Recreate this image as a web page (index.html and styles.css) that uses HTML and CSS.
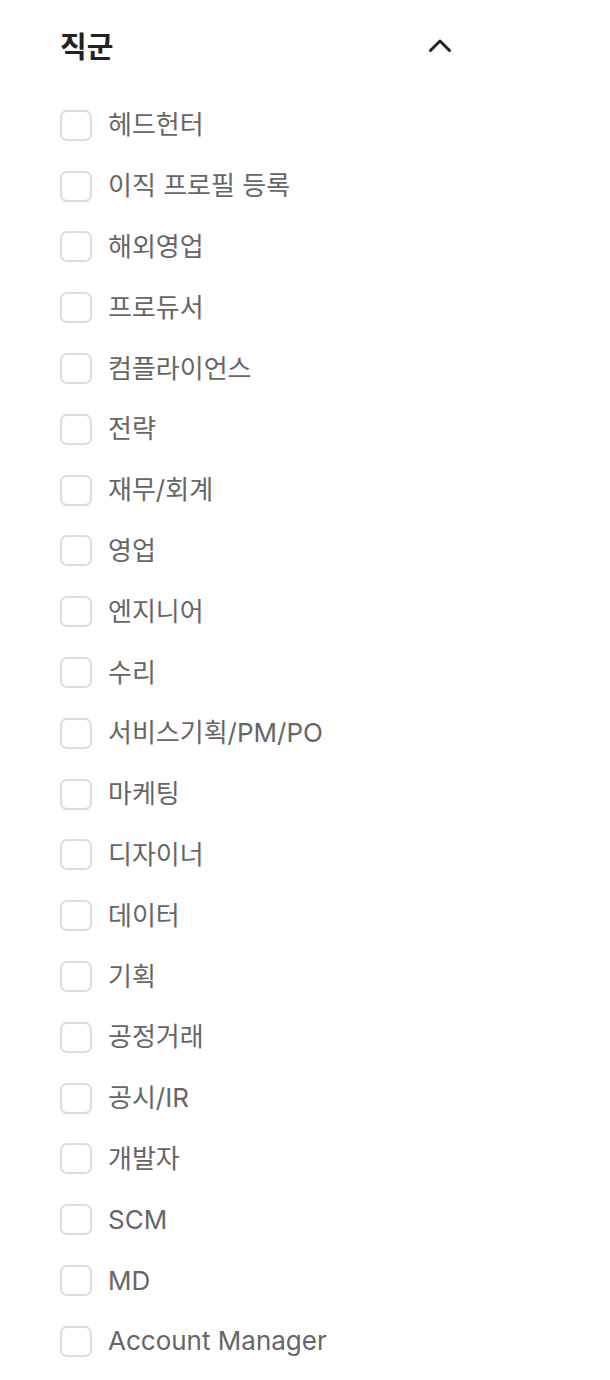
FILE: index.html
```html
<!DOCTYPE html>
<html lang="ko">
<head>
    <meta charset="UTF-8">
    <meta name="viewport" content="width=device-width, initial-scale=1.0">
    <title>직군</title>
    <link rel="stylesheet" href="styles.css">
</head>
<body>
    <div class="filter">
        <div class="filter-head">
            <h3 class="filter-title">직군</h3>
            <button class="toggle" type="button">
                <svg width="24" height="16" viewBox="0 0 24 16">
                    <path d="M2.5 13.5 L12 4 L21.5 13.5" fill="none" stroke="#222" stroke-width="3" stroke-linecap="round" stroke-linejoin="round"/>
                </svg>
            </button>
        </div>
        <ul class="options">
            <li><label><input type="checkbox"><span class="name">헤드헌터</span></label></li>
            <li><label><input type="checkbox"><span class="name">이직 프로필 등록</span></label></li>
            <li><label><input type="checkbox"><span class="name">해외영업</span></label></li>
            <li><label><input type="checkbox"><span class="name">프로듀서</span></label></li>
            <li><label><input type="checkbox"><span class="name">컴플라이언스</span></label></li>
            <li><label><input type="checkbox"><span class="name">전략</span></label></li>
            <li><label><input type="checkbox"><span class="name">재무/회계</span></label></li>
            <li><label><input type="checkbox"><span class="name">영업</span></label></li>
            <li><label><input type="checkbox"><span class="name">엔지니어</span></label></li>
            <li><label><input type="checkbox"><span class="name">수리</span></label></li>
            <li><label><input type="checkbox"><span class="name">서비스기획/PM/PO</span></label></li>
            <li><label><input type="checkbox"><span class="name">마케팅</span></label></li>
            <li><label><input type="checkbox"><span class="name">디자이너</span></label></li>
            <li><label><input type="checkbox"><span class="name">데이터</span></label></li>
            <li><label><input type="checkbox"><span class="name">기획</span></label></li>
            <li><label><input type="checkbox"><span class="name">공정거래</span></label></li>
            <li><label><input type="checkbox"><span class="name">공시/IR</span></label></li>
            <li><label><input type="checkbox"><span class="name">개발자</span></label></li>
            <li><label><input type="checkbox"><span class="name">SCM</span></label></li>
            <li><label><input type="checkbox"><span class="name">MD</span></label></li>
            <li><label><input type="checkbox"><span class="name">Account Manager</span></label></li>
        </ul>
    </div>
</body>
</html>
```

FILE: styles.css
```css
body{
    margin: 0;
    background: #fff;
    font-family: Inter, "Noto Sans CJK KR", sans-serif;
}
.filter{
    width: 392px;
    padding: 22px 0 0 60px;
}
.filter-head{
    display: flex;
    align-items: center;
    justify-content: space-between;
    height: 46px;
}
.filter-title{
    margin: 0;
    font-size: 29px;
    font-weight: 700;
    color: #222;
}
.toggle{
    border: 0;
    background: none;
    padding: 0;
    display: flex;
}
.options{
    list-style: none;
    margin: 27px 0 0;
    padding: 0;
}
.options li{
    height: 60.8px;
    display: flex;
    align-items: center;
}
.options label{
    display: flex;
    align-items: center;
}
.options input{
    appearance: none;
    -webkit-appearance: none;
    margin: 0;
    width: 32px;
    height: 31px;
    border: 2px solid #dcdcdc;
    border-radius: 7px;
    background: #fff;
}
.name{
    margin-left: 16px;
    font-size: 26px;
    color: #666;
    line-height: 32px;
}
```
